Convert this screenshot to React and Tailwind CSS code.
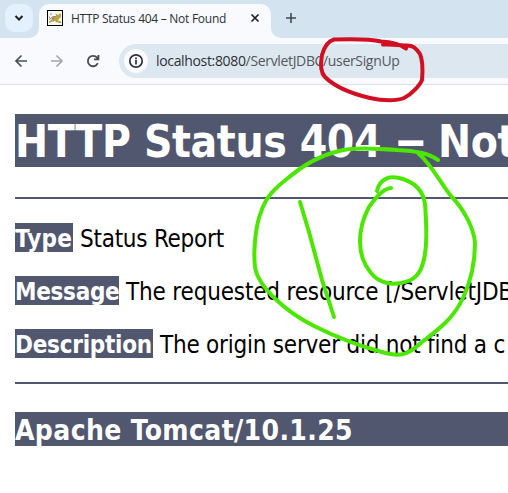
import React from "react";

const page = "font-['DejaVu_Sans_Condensed','DejaVu_Sans',sans-serif]";

function TomcatIcon() {
  return (
    <svg className="block h-4 w-4" viewBox="0 0 16 16">
      <rect x=".5" y=".5" width="15" height="15" fill="#f8f9f4" stroke="#000" />
      <path d="M3 4h2M2 6.500l1 2M2 12l2-1M12 12.500h2" stroke="#8b8b8b" fill="none" />
      <path d="M8.500 3 10 4.500h2L14 3v4l-2 2-1 1.500 3 1v1h-4L8 11l-2 .500-4 1.500v-1l3-3 1-2 3-1z" fill="#c0a343" />
      <path d="M2.500 9.500l3-2.500 3-.5M5 8l2 1.500" stroke="#7c745c" fill="none" />
    </svg>
  );
}

function TabStrip() {
  return (
    <div className="flex h-[38px] bg-[#d3e3ef]">
      <div className="flex w-[39px] shrink-0 pl-[5px] pt-1">
        <div className="flex h-7 w-7 items-center justify-center rounded-[10px] bg-[#e3f1fe]">
          <svg className="h-4 w-4" viewBox="0 0 16 16" fill="none" stroke="#1f2226" strokeWidth="2">
            <path d="m4.500 6 3.500 3.500L11.500 6" />
          </svg>
        </div>
      </div>
      <div className="relative mt-1 flex h-[34px] w-[232px] shrink-0 items-start rounded-t-[10px] bg-[#f8fafe] pl-2 pt-1.5">
        <svg className="absolute -left-[10px] bottom-0 h-[10px] w-[10px]" viewBox="0 0 10 10">
          <path d="M10 0v10H0A10 10 0 0 0 10 0Z" fill="#f8fafe" />
        </svg>
        <svg className="absolute -right-[10px] bottom-0 h-[10px] w-[10px]" viewBox="0 0 10 10">
          <path d="M0 0v10h10A10 10 0 0 1 0 0Z" fill="#f8fafe" />
        </svg>
        <TomcatIcon />
        <span className="ml-2 w-[176px] whitespace-nowrap font-['Open_Sans',sans-serif] text-[12px] leading-[17px] tracking-[-0.27px] text-[#2d3035]">
          HTTP Status 404 – Not Found
        </span>
        <svg className="-mt-px h-4 w-4" viewBox="0 0 16 16" fill="none" stroke="#202225" strokeWidth="1.700">
          <path d="m4.500 5.500 7 7m0-7-7 7" />
        </svg>
      </div>
      <svg className="ml-3 mt-[10px] h-4 w-4" viewBox="0 0 16 16" fill="none" stroke="#414b55" strokeWidth="1.600">
        <path d="M8 3v10M3 8h10" />
      </svg>
    </div>
  );
}

function Toolbar() {
  return (
    <div className="flex h-[47px] items-center border-b border-[#d8e1e9] bg-[#f8fafe] pl-[13px]">
      <svg className="h-4 w-4 shrink-0" viewBox="0 0 16 16" fill="none" stroke="#45505a" strokeWidth="1.700">
        <path d="M14 8H3m5.500-5.500L3 8l5.500 5.500" />
      </svg>
      <svg className="ml-5 h-4 w-4 shrink-0" viewBox="0 0 16 16" fill="none" stroke="#a3a7ab" strokeWidth="1.700">
        <path d="M2 8h11M7.500 2.500 13 8l-5.500 5.500" />
      </svg>
      <svg className="ml-5 h-4 w-4 shrink-0" viewBox="0 0 16 16" fill="none" stroke="#414b55" strokeWidth="1.800">
        <path d="M12.800 10.200a5.200 5.200 0 1 1-.8-5.600L13.300 6M13.400 2v4.400H9" />
      </svg>
      <div className="ml-[18px] flex h-[34px] flex-1 items-center rounded-l-full bg-[#dce7ef] pl-[5px]">
        <div className="flex h-6 w-6 shrink-0 items-center justify-center rounded-full bg-[#f8fafe]">
          <svg className="h-4 w-4" viewBox="0 0 16 16" fill="none" stroke="#303234" strokeWidth="1.700">
            <circle cx="8" cy="8" r="6.200" />
            <path d="M8 7v4.500M8 4.500v1.700" />
          </svg>
        </div>
        <span className="ml-2 whitespace-nowrap font-['Open_Sans',sans-serif] text-[14px] leading-5 tracking-[-0.340px] text-[#54585d]">
          <span className="text-[#2d3035]">localhost:8080</span>/ServletJDBC/userSignUp
        </span>
      </div>
    </div>
  );
}

function Row({ label, children, labelClass, textClass }) {
  return (
    <p className="flex h-[29px] whitespace-nowrap text-[24px] leading-[33px] text-black">
      <b className={"block h-[29px] shrink-0 bg-[#525770] text-white " + labelClass}>{label}</b>
      <span className={"ml-[7px] " + textClass}>{children}</span>
    </p>
  );
}

function Ink() {
  return (
    <svg className="pointer-events-none absolute left-0 top-0 h-[493px] w-[508px]" viewBox="0 0 508 493" fill="none" strokeLinecap="round" strokeLinejoin="round">
      <path stroke="#d10f22" strokeWidth="4" d="M406 48.500C398 43 389 42 381 41.500C370 39 348 39 334 39.500C328 41 324 48 322 55C320 66 321 73 325 77C336 88 353 94 370 98C383 101 397 101 404 98C412 94 420 85 422 80C423 69 423 61 420 54C416 48 413 45 406 45.500C399 45 390 44 383 44.500" />
      <g stroke="#4ce600" strokeWidth="4">
        <path d="M438 160C428 153 416 151 397 150C372 148 351 147 339 151C318 156 302 166 288 178C274 189 266 197 261 212C256 224 253 249 255 267C258 287 286 312 314 326C332 335 352 344 382 352C399 357 407 356 422 342C442 327 454 317 463 298C470 283 475 263 475 243C474 228 463 208 451 196C440 182 431 164 418 153" />
        <path d="m300 202 9 30 13 48 12 37" />
        <path d="M391 188C383 189 377 196 369 207C362 220 360 231 360 241C360 253 364 265 371 273C379 283 391 285 401 283C414 281 421 274 424 259C428 243 426 217 425 204C423 190 415 183 403 179C390 175 380 178 377 191" />
      </g>
    </svg>
  );
}

export default function App() {
  return (
    <div className="relative h-[493px] w-[508px] overflow-hidden bg-white">
      <TabStrip />
      <Toolbar />
      <main className={"pl-[15px] pt-[29px] " + page}>
        <h1 className="h-[53px] whitespace-nowrap bg-[#525770] text-[44px] font-bold leading-[56px] tracking-[-0.400px] text-white">
          HTTP Status 404 <span className="inline-block w-[30px] origin-left -translate-y-0.5 scale-x-160">–</span> Not
        </h1>
        <div className="mt-[30px] h-[2px] bg-[#525770]" />
        <div className="mt-6 flex flex-col gap-6">
          <Row label="Type" labelClass="w-[58px] tracking-[0.300px]" textClass="tracking-[-0.250px]">
            Status Report
          </Row>
          <Row label="Message" labelClass="w-[104px] tracking-[-0.300px]" textClass="tracking-[-0.170px]">
            The requested resource [/ServletJDB
          </Row>
          <Row label="Description" labelClass="w-[138px] tracking-[-0.250px]" textClass="tracking-[-0.230px]">
            The origin server did not find a c
          </Row>
        </div>
        <div className="mt-6 h-[2px] bg-[#525770]" />
        <h3 className="mt-7 h-[34px] bg-[#525770] text-[28px] font-bold leading-[38px] tracking-[0.370px] text-white">
          Apache Tomcat/10.1.25
        </h3>
      </main>
      <Ink />
    </div>
  );
}
